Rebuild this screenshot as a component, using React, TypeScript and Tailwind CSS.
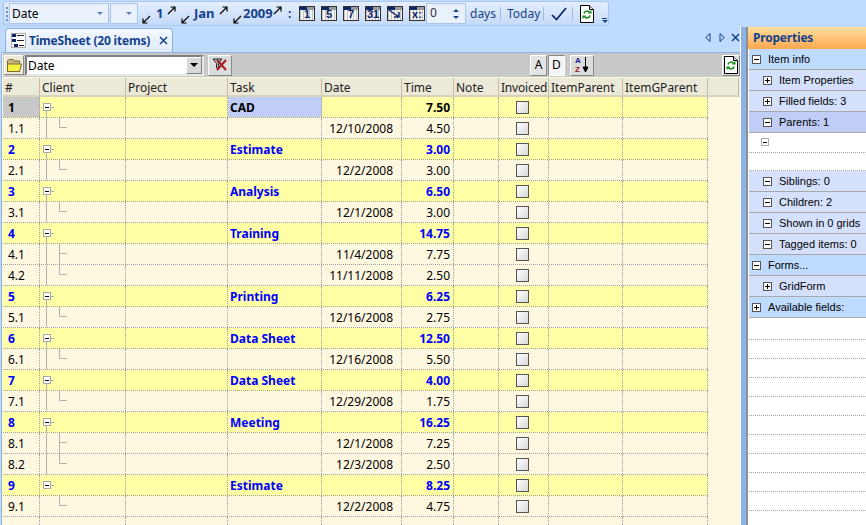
import type { ReactNode } from 'react';

const FONT = "font-['Noto_Sans','Liberation_Sans',sans-serif]";

type Row = { id: string; task?: string; date?: string; time?: string; parent?: boolean; selected?: boolean; last?: boolean; more?: boolean; blank?: boolean };

const rows: Row[] = [
  { id: '1', task: 'CAD', time: '7.50', parent: true, selected: true },
  { id: '1.1', date: '12/10/2008', time: '4.50' },
  { id: '2', task: 'Estimate', time: '3.00', parent: true },
  { id: '2.1', date: '12/2/2008', time: '3.00' },
  { id: '3', task: 'Analysis', time: '6.50', parent: true },
  { id: '3.1', date: '12/1/2008', time: '3.00' },
  { id: '4', task: 'Training', time: '14.75', parent: true },
  { id: '4.1', date: '11/4/2008', time: '7.75', more: true },
  { id: '4.2', date: '11/11/2008', time: '2.50' },
  { id: '5', task: 'Printing', time: '6.25', parent: true },
  { id: '5.1', date: '12/16/2008', time: '2.75' },
  { id: '6', task: 'Data Sheet', time: '12.50', parent: true },
  { id: '6.1', date: '12/16/2008', time: '5.50' },
  { id: '7', task: 'Data Sheet', time: '4.00', parent: true },
  { id: '7.1', date: '12/29/2008', time: '1.75' },
  { id: '8', task: 'Meeting', time: '16.25', parent: true },
  { id: '8.1', date: '12/1/2008', time: '7.25', more: true },
  { id: '8.2', date: '12/3/2008', time: '2.50' },
  { id: '9', task: 'Estimate', time: '8.25', parent: true, last: true },
  { id: '9.1', date: '12/2/2008', time: '4.75', last: true },
  { id: '', blank: true },
];

const headers = [
  { label: '#', w: 'w-[37px]' },
  { label: 'Client', w: 'w-[86px]' },
  { label: 'Project', w: 'w-[102px]' },
  { label: 'Task', w: 'w-[94px]' },
  { label: 'Date', w: 'w-[80px]' },
  { label: 'Time', w: 'w-[52px]' },
  { label: 'Note', w: 'w-[45px]' },
  { label: 'Invoiced', w: 'w-[50px] tracking-[-0.2px]' },
  { label: 'ItemParent', w: 'w-[74px]' },
  { label: 'ItemGParent', w: 'w-[85px]' },
  { label: '', w: 'w-[31px]' },
];

// ==================== Icons ====================

function ArrowDown({ className }: { className: string }) {
  return (
    <svg width="9" height="9" viewBox="0 0 9 9" className={`shrink-0 self-start mt-[13px] ${className}`}>
      <path d="M8 1L1.5 7.5M1 3.5V8H5.5" stroke="#000" strokeWidth="1.2" fill="none" />
    </svg>
  );
}

function ArrowUp() {
  return (
    <svg width="9" height="9" viewBox="0 0 9 9" className="shrink-0 self-start mt-[4px]">
      <path d="M1 8L7.5 1.5M3.5 1H8V5.5" stroke="#000" strokeWidth="1.2" fill="none" />
    </svg>
  );
}

function CalIcon({ children }: { children?: ReactNode }) {
  return (
    <div className="relative w-[16px] h-[15px] border border-[#333] bg-[repeating-linear-gradient(90deg,#c4c4c4_0,#c4c4c4_1px,#f4f4f4_1px,#f4f4f4_3px)] shrink-0">
      <div className="h-[3px] w-[7px] bg-[#0a246a]" />
      <div className="h-[3px] w-[7px] absolute right-0 top-0 bg-[#9a9a9a]" />
      <div className="absolute inset-x-0 top-[2px] text-center text-[11px] leading-[11px] font-bold text-[#0a246a] font-['Liberation_Sans',sans-serif]">
        {children}
      </div>
    </div>
  );
}

function GreenRefresh() {
  return (
    <svg width="14" height="18" viewBox="0 0 14 18">
      <path d="M.5.5H9.5L13.5 4.5V17.5H.5Z" fill="#fff" stroke="#000" />
      <path d="M9.5.5V4.5H13.5" fill="#ddd" stroke="#000" />
      <path d="M4 8.5A3 3 0 0 1 9.5 7.5" stroke="#0a8a0a" strokeWidth="1.5" fill="none" />
      <path d="M8 8.5H11.5V5Z" fill="#0a8a0a" />
      <path d="M10 10.5A3 3 0 0 1 4.5 11.5" stroke="#0a8a0a" strokeWidth="1.5" fill="none" />
      <path d="M6 10.5H2.5V14Z" fill="#0a8a0a" />
    </svg>
  );
}

function PlusMinus({ plus }: { plus?: boolean }) {
  return (
    <svg width="9" height="9" viewBox="0 0 9 9" className="shrink-0">
      <rect x=".5" y=".5" width="8" height="8" fill="#fff" stroke="#555" />
      <path d="M2 4.5H7" stroke="#000" />
      {plus && <path d="M4.5 2V7" stroke="#000" />}
    </svg>
  );
}

function TreeCell({ row }: { row: Row }) {
  if (row.blank) return null;
  if (row.parent) {
    return (
      <svg width="30" height="20" viewBox="0 0 30 20" className="block">
        {!row.last && <path d="M6.5 14V21" stroke="#b0b0b0" />}
        <rect x="3.5" y="6.5" width="7" height="7" fill="#fff" stroke="#a8a8a8" />
        <path d="M5 10.5H9" stroke="#000" />
        <path d="M11 10.5H14" stroke="#b0b0b0" />
      </svg>
    );
  }
  return (
    <svg width="30" height="20" viewBox="0 0 30 20" className="block">
      {!row.last && <path d="M6.5 -1V21" stroke="#b0b0b0" />}
      <path d={row.more ? 'M19.5 -1V21M19.5 9.5H27' : 'M19.5 -1V9.5H27'} stroke="#b0b0b0" fill="none" />
    </svg>
  );
}

// ==================== Toolbar ====================

function Toolbar() {
  return (
    <div className="h-[27px] pl-[3px] pt-[1px] flex items-start">
      <div className="w-[606px] h-[25px] rounded-[3px] border border-[#a9c6ec] bg-gradient-to-b from-[#e4eefc] to-[#c4daf8] flex items-center text-[#15428b] text-[12px]">
        <div className="w-[5px] shrink-0 flex flex-col gap-[2px] items-center">
          <div className="w-[2px] h-[2px] bg-[#6f93c6]" />
          <div className="w-[2px] h-[2px] bg-[#6f93c6]" />
          <div className="w-[2px] h-[2px] bg-[#6f93c6]" />
          <div className="w-[2px] h-[2px] bg-[#6f93c6]" />
        </div>
        <div className="w-[100px] shrink-0 h-[21px] border border-[#a9c6ec] bg-[#e9f1fc] flex items-center justify-between pl-[2px] pr-[5px] text-black">
          <span>Date</span>
          <span className="w-0 h-0 border-x-[3px] border-x-transparent border-t-[3px] border-t-[#5c84bc]" />
        </div>
        <div className="ml-[1px] w-[28px] shrink-0 h-[21px] border border-[#a9c6ec] bg-[#e9f1fc] flex items-center justify-end pr-[5px]">
          <span className="w-0 h-0 border-x-[3px] border-x-transparent border-t-[3px] border-t-[#5c84bc]" />
        </div>
        <ArrowDown className="ml-[4px]" />
        <span className="ml-[5px] w-[11px] shrink-0 font-bold text-[13px]">1</span>
        <ArrowUp />
        <ArrowDown className="ml-[5px]" />
        <span className="ml-[4px] w-[25px] shrink-0 font-bold text-[13px]">Jan</span>
        <ArrowUp />
        <ArrowDown className="ml-[5px]" />
        <span className="ml-[1px] w-[30px] shrink-0 font-bold text-[13px]">2009</span>
        <ArrowUp />
        <span className="ml-[6px] w-[4px] shrink-0 font-bold">:</span>
        <div className="ml-[7px] flex items-center gap-[6px] shrink-0">
          <CalIcon>1</CalIcon>
          <CalIcon>5</CalIcon>
          <CalIcon>7</CalIcon>
          <CalIcon>31</CalIcon>
          <CalIcon>
            <svg width="14" height="10" viewBox="0 0 14 10" className="mx-auto">
              <path d="M1 1L11 8M11 3V8H6" stroke="#0a246a" strokeWidth="1.5" fill="none" />
            </svg>
          </CalIcon>
          <CalIcon>x:</CalIcon>
        </div>
        <div className="ml-[1px] w-[40px] shrink-0 h-[21px] border border-[#a9c6ec] bg-[#e9f1fc] flex items-center justify-between pl-[3px] pr-[6px] text-[#333]">
          <span className="-mt-[1px]">0</span>
          <span className="flex flex-col gap-[4px]">
            <span className="block w-0 h-0 border-x-[3px] border-x-transparent border-b-[3px] border-b-[#15428b]" />
            <span className="block w-0 h-0 border-x-[3px] border-x-transparent border-t-[3px] border-t-[#15428b]" />
          </span>
        </div>
        <span className="ml-[4px] w-[24px] shrink-0">days</span>
        <div className="w-px h-[13px] shrink-0 bg-[#9ebbe2] ml-[6px]" />
        <span className="ml-[6px] w-[30px] shrink-0 whitespace-nowrap">Today</span>
        <div className="w-px h-[13px] shrink-0 bg-[#9ebbe2] ml-[6px]" />
        <svg width="16" height="14" viewBox="0 0 16 14" className="ml-[7px] shrink-0">
          <path d="M1 8L5.5 12.5L15 1" stroke="#0a246a" strokeWidth="1.7" fill="none" />
        </svg>
        <div className="w-px h-[13px] shrink-0 bg-[#9ebbe2] ml-[5px]" />
        <div className="ml-[7px] shrink-0"><GreenRefresh /></div>
        <div className="ml-[8px] self-end mb-[2px] flex flex-col gap-[1px] shrink-0">
          <div className="w-[5px] h-px bg-[#15428b]" />
          <div className="w-0 h-0 border-x-[3px] border-x-transparent border-t-[3px] border-t-[#15428b]" />
        </div>
      </div>
    </div>
  );
}

// ==================== Grid ====================

function FilterBar() {
  return (
    <div className="h-[24px] shrink-0 bg-[#c8c8c8] flex items-center pl-[1px]">
      <div className="w-[20px] h-[20px] shrink-0 bg-[#ece9d8] border border-t-white border-l-white border-r-[#888] border-b-[#888] flex items-center justify-center">
        <svg width="15" height="13" viewBox="0 0 15 13">
          <path d="M.5 12.5V2L2 .5H6L7 2H12.5V12.5Z" fill="#c9b878" stroke="#7a6c30" />
          <path d="M.5 12.5V5H14.5L12.5 12.5Z" fill="#f8f040" stroke="#7a6c30" />
        </svg>
      </div>
      <div className="ml-[1px] w-[179px] h-[21px] shrink-0 bg-white border-2 border-t-[#808080] border-l-[#808080] border-b-[#e8e8e8] border-r-[#e8e8e8] flex items-center justify-between text-[12px] text-black">
        <span className="pl-[1px] pt-[1px]">Date</span>
        <div className="w-[16px] h-[17px] bg-[#d8d8d8] border border-t-white border-l-white border-r-[#808080] border-b-[#808080] flex items-center justify-center">
          <span className="w-0 h-0 border-x-[4px] border-x-transparent border-t-[4px] border-t-black" />
        </div>
      </div>
      <div className="ml-[4px] w-[24px] h-[21px] shrink-0 bg-[#dcdcdc] border border-t-white border-l-white border-r-[#888] border-b-[#888] flex items-center justify-center">
        <svg width="16" height="14" viewBox="0 0 16 14">
          <path d="M1 1H10L6.5 5.5V11L4.5 10V5.5Z" fill="#bbb" stroke="#222" />
          <path d="M5 2L14 12M14 2L5 12" stroke="#a81c1c" strokeWidth="2" />
        </svg>
      </div>
      <div className="flex-1" />
      <div className="w-[17px] h-[21px] shrink-0 bg-[#e4e4e4] border border-t-white border-l-white border-r-[#888] border-b-[#888] flex items-center justify-center text-[12px]">A</div>
      <div className="ml-[1px] w-[17px] h-[21px] shrink-0 bg-[#f4f4f4] border border-t-[#888] border-l-[#888] border-r-white border-b-white flex items-center justify-center text-[12px]">D</div>
      <div className="ml-[5px] w-[24px] h-[21px] shrink-0 bg-[#dcdcdc] border border-t-white border-l-white border-r-[#888] border-b-[#888] flex items-center justify-center gap-[1px]">
        <span className="flex flex-col text-[8px] leading-[9px] font-bold font-['Liberation_Sans',sans-serif]">
          <span className="text-[#1a1a9a]">A</span>
          <span className="text-[#9a1010]">Z</span>
        </span>
        <svg width="7" height="16" viewBox="0 0 7 16">
          <path d="M3.5 0V14M1 10L3.5 15L6 10Z" stroke="#000" fill="#000" />
        </svg>
      </div>
      <div className="w-[128px] shrink-0" />
      <div className="w-[18px] h-[21px] shrink-0 bg-[#dcdcdc] border border-t-white border-l-white border-r-[#888] border-b-[#888] flex items-center justify-center">
        <GreenRefresh />
      </div>
    </div>
  );
}

function GridRow({ row }: { row: Row }) {
  const cellBase = 'h-full shrink-0 border-r border-dotted border-[#a0a0a0]';
  const tone = row.selected ? 'text-black' : 'text-[#0000ff]';
  const bold = row.parent ? `font-bold ${tone}` : 'text-black';
  return (
    <div className={`h-[21px] w-[705px] flex border-b border-dotted border-[#a0a0a0] text-[12px] leading-[22px] shrink-0 ${bold} ${row.parent ? 'bg-[#ffffa5]' : ''}`}>
      <div className={`${cellBase} w-[37px] pl-[5px] ${row.selected ? 'bg-[#c8c8c8]' : ''}`}>{row.id}</div>
      <div className={`${cellBase} w-[86px]`}><TreeCell row={row} /></div>
      <div className={`${cellBase} w-[102px]`} />
      <div className={`${cellBase} w-[94px] pl-[2px] ${row.selected ? 'bg-[#bfcdf7]' : ''}`}>{row.task}</div>
      <div className={`${cellBase} w-[80px] pr-[8px] text-right`}>{row.date}</div>
      <div className={`${cellBase} w-[52px] pr-[3px] text-right`}>{row.time}</div>
      <div className={`${cellBase} w-[45px]`} />
      <div className={`${cellBase} w-[50px] flex items-center justify-center pr-[2px]`}>
        {!row.blank && <div className="w-[13px] h-[13px] border border-[#555] bg-gradient-to-br from-white to-[#d8d8d8]" />}
      </div>
      <div className={`${cellBase} w-[74px]`} />
      <div className={`${cellBase} w-[85px]`} />
    </div>
  );
}

function Grid() {
  return (
    <div className="flex-1 min-w-0 flex flex-col">
      <div className="h-[25px] shrink-0 flex items-end justify-between pl-[5px]">
        <div className="w-[168px] h-[24px] rounded-t-[4px] border border-b-0 border-[#8db2e3] bg-gradient-to-b from-[#f4f8fe] to-[#dfeafb] flex items-center pl-[5px] text-[12px] font-bold text-[#15428b]">
          <svg width="15" height="15" viewBox="0 0 15 15" className="shrink-0">
            <rect x=".5" y=".5" width="14" height="14" fill="#fff" stroke="#aaa" />
            <path d="M1 1H5V4H1ZM1 6H5V9H1ZM3 11H7V14H3Z" fill="#0a246a" />
            <path d="M6 2.5H13M6 7.5H13M8 12.5H13" stroke="#222" />
          </svg>
          <span className="ml-[3px] whitespace-nowrap tracking-[-0.2px]">TimeSheet (20 items)</span>
          <svg width="9" height="9" viewBox="0 0 9 9" className="ml-[9px] shrink-0">
            <path d="M1 1L8 8M8 1L1 8" stroke="#15428b" strokeWidth="1.5" />
          </svg>
        </div>
        <div className="flex items-center pr-[0px] pb-[10px]">
          <svg width="6" height="9" viewBox="0 0 6 9"><path d="M5 .5L.7 4.5L5 8.5Z" fill="none" stroke="#15428b" /></svg>
          <svg width="6" height="9" viewBox="0 0 6 9" className="ml-[8px]"><path d="M1 .5L5.3 4.5L1 8.5Z" fill="none" stroke="#15428b" /></svg>
          <svg width="9" height="9" viewBox="0 0 9 9" className="ml-[6px]"><path d="M1 1L8 8M8 1L1 8" stroke="#15428b" strokeWidth="1.5" /></svg>
        </div>
      </div>
      <div className="flex-1 min-h-0 ml-[1px] pl-[1px] border-l border-t border-[#8db2e3] bg-[#fff8e1] flex flex-col overflow-hidden">
        <FilterBar />
        <div className="h-[19px] shrink-0 mt-[1px] bg-[#ece9d8] border-b-2 border-[#d8d2bd] flex text-[12px] leading-[19px] text-[#222]">
          {headers.map((h) => (
            <div key={h.label} className={`${h.w} shrink-0 pl-[2px] border-r border-[#c4bea6] whitespace-nowrap overflow-hidden`}>
              {h.label}
            </div>
          ))}
        </div>
        {rows.map((r) => (
          <GridRow key={r.id} row={r} />
        ))}
      </div>
    </div>
  );
}

// ==================== Properties ====================

function PropRow({ label, plus, level, tone }: { label: string; plus?: boolean; level: 0 | 1; tone?: string }) {
  const bg = tone ?? (level === 0 ? 'bg-[#bfdbff]' : 'bg-[#d5e0fd]');
  return (
    <div className={`h-[21px] shrink-0 flex items-center border-b border-[#a8a8a8] text-[11px] text-black ${bg} ${level === 0 ? 'pl-[3px]' : 'pl-[14px]'}`}>
      <PlusMinus plus={plus} />
      <span className="ml-[7px] whitespace-nowrap">{label}</span>
    </div>
  );
}

function Properties() {
  return (
    <div className="w-[118px] shrink-0 flex flex-col bg-white font-['Liberation_Sans',sans-serif]">
      <div className="h-[22px] shrink-0 bg-gradient-to-b from-[#ffdf9e] to-[#fba84d] flex items-center pl-[5px] text-[12px] font-bold text-[#15428b] font-['Noto_Sans',sans-serif] tracking-[-0.2px]">
        Properties
      </div>
      <div className="pl-[1px] flex flex-col">
        <PropRow label="Item info" level={0} />
        <PropRow label="Item Properties" plus level={1} />
        <PropRow label="Filled fields: 3" plus level={1} />
        <PropRow label="Parents: 1" level={1} tone="bg-[#bfcdf7]" />
        <div className="h-[20px] shrink-0 pl-[12px] pt-[5px] border-b border-dotted border-[#a0a0a0]">
          <div className="w-[8px] h-[8px] border border-[#aaa] flex items-center justify-center"><div className="w-[4px] h-px bg-black" /></div>
        </div>
        <div className="h-[18px] shrink-0 border-b border-dotted border-[#a0a0a0]" />
        <PropRow label="Siblings: 0" level={1} />
        <PropRow label="Children: 2" level={1} />
        <PropRow label="Shown in 0 grids" level={1} />
        <PropRow label="Tagged items: 0" level={1} />
        <PropRow label="Forms..." level={0} />
        <PropRow label="GridForm" plus level={1} />
        <PropRow label="Available fields:" plus level={0} />
        <div className="h-[22px] shrink-0 border-b border-dotted border-[#a0a0a0]" />
        {Array.from({ length: 9 }).map((_, i) => (
          <div key={i} className="h-[19px] shrink-0 border-b border-dotted border-[#a0a0a0]" />
        ))}
      </div>
    </div>
  );
}

export default function App() {
  return (
    <div className={`w-[866px] h-[525px] overflow-hidden bg-[#bfdbff] flex flex-col ${FONT}`}>
      <Toolbar />
      <div className="flex-1 min-h-0 flex">
        <Grid />
        <div className="w-[8px] shrink-0 bg-[#8db2e3] border-r-2 border-[#8a8f98] border-l border-l-white" />
        <Properties />
      </div>
    </div>
  );
}
